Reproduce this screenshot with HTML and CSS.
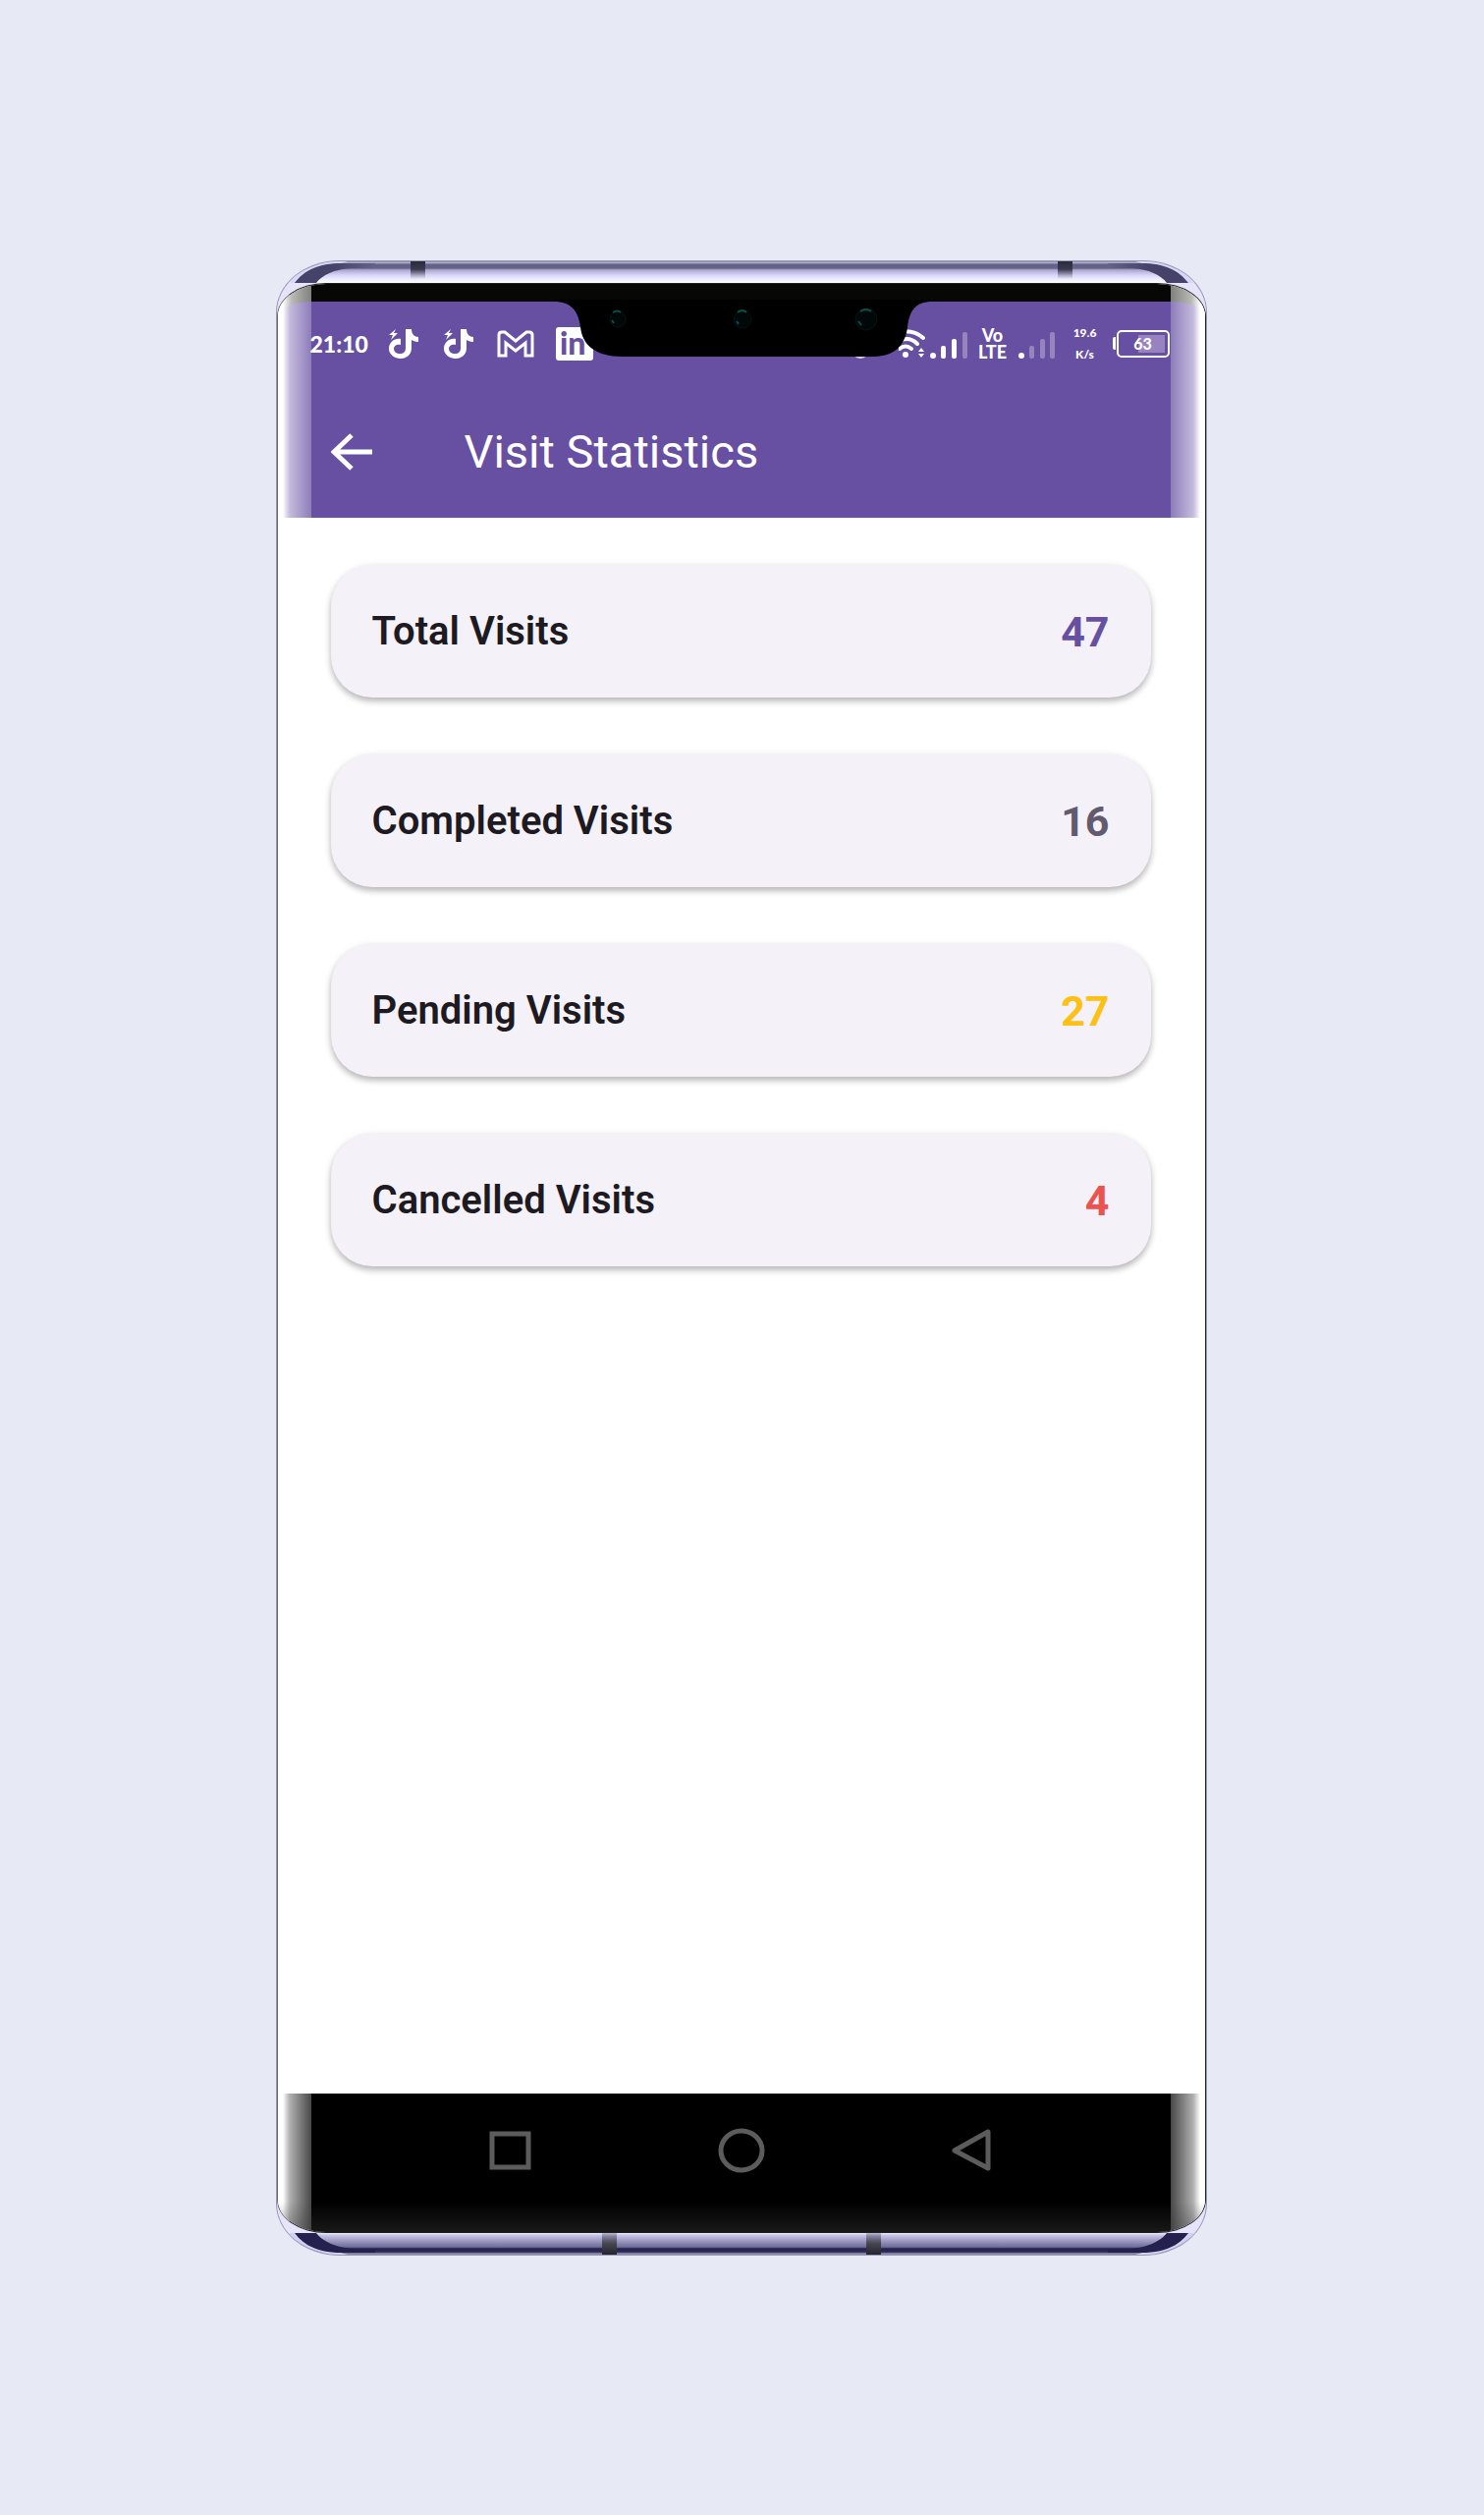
FILE: index.html
```html
<!DOCTYPE html>
<html lang="en">
<head>
<meta charset="utf-8">
<meta name="viewport" content="width=device-width, initial-scale=1">
<title>Visit Statistics</title>
<link rel="stylesheet" href="styles.css">
</head>
<body>
<div class="phone">
  <svg class="rail" viewBox="0 0 946 22" preserveAspectRatio="none" aria-hidden="true">
    <defs>
      <linearGradient id="metal-top" x1="0" y1="0" x2="0" y2="1"><stop offset="0" stop-color="#8987a8"/><stop offset=".08" stop-color="#b4b2d0"/><stop offset=".13" stop-color="#65628a"/><stop offset=".32" stop-color="#65628a"/><stop offset=".4" stop-color="#aaa8cc"/><stop offset=".65" stop-color="#d9d7fa"/><stop offset="1" stop-color="#fff"/></linearGradient>
      <linearGradient id="mark-top" x1="0" y1="0" x2="0" y2="1"><stop offset="0" stop-color="#2b2b40"/><stop offset=".45" stop-color="#3a3a4e"/><stop offset="1" stop-color="#77778c" stop-opacity="0"/></linearGradient>
      <linearGradient id="wedge-top" x1="0" y1="0" x2="1" y2="0"><stop offset="0" stop-color="#454369"/><stop offset=".5" stop-color="#454369"/><stop offset="1" stop-color="#65628a"/></linearGradient>
      <g id="corner-top"><path fill="#d9d6f8" d="M0 22V0h72C54 4 44 12 38 22z"/><path fill="url(#wedge-top)" d="M18 22C28 9 42 2 66 2h34v5H76C58 8 46 14 40 22z"/></g>
    </defs>
    <rect width="946" height="22" fill="url(#metal-top)"/>
    <use href="#corner-top"/><use href="#corner-top" transform="matrix(-1 0 0 1 946 0)"/>
    <path fill="url(#mark-top)" d="M136 0h15v18h-15zM795 0h15v18h-15z"/>
  </svg>
  <div class="screen">
    <div class="top">
      <header class="header">
        <div class="status">
          <div class="status-left">
            <span class="clock">21:10</span>
            <svg class="app-icon" viewBox="0 0 30 32" aria-hidden="true"><path d="M17 1h6c0 5 3 8 7 8v5c-3 0-5-1-7-2v8c0 7-5 11-11 11S0 27 0 21s5-11 12-10v6c-4-1-7 1-7 4s3 5 6 5c4 0 6-2 6-6z"/><path d="M7 1 0 7h4l-2 5 7-7H5z"/></svg>
            <svg class="app-icon" viewBox="0 0 30 32" aria-hidden="true"><path d="M17 1h6c0 5 3 8 7 8v5c-3 0-5-1-7-2v8c0 7-5 11-11 11S0 27 0 21s5-11 12-10v6c-4-1-7 1-7 4s3 5 6 5c4 0 6-2 6-6z"/><path d="M7 1 0 7h4l-2 5 7-7H5z"/></svg>
            <svg class="mail-icon" viewBox="0 0 38 28" aria-hidden="true"><path d="M2 5Q2 2 5 2h3l11 9 11-9h3q3 0 3 3v21h-7V13l-10 8-10-8v13H2z"/></svg>
            <svg class="in-icon" viewBox="0 0 38 34" aria-hidden="true"><rect width="38" height="34" rx="3"/><text x="4" y="28">in</text></svg>
          </div>
          <div class="status-right">
            <svg class="signals" viewBox="0 0 72 32" aria-hidden="true"><path class="waves" d="M0 4Q15 1 25 10M0 13q11-5 19 3M1 21q6-5 12 0"/><circle cx="7" cy="27" r="3"/><path d="m23 20 3 4h-6zm0 10 3-4h-6z"/><circle cx="35" cy="28" r="3"/><rect x="43" y="18" width="5" height="13" rx="2"/><rect x="54" y="11" width="5" height="20" rx="2"/><rect class="dim" x="65" y="4" width="5" height="27" rx="2"/></svg>
            <span class="lte"><span>Vo</span><span>LTE</span></span>
            <svg class="bars" viewBox="0 0 37 32" aria-hidden="true"><circle cx="3" cy="28" r="3"/><rect class="dim" x="11" y="18" width="5" height="13" rx="2"/><rect class="dim" x="22" y="11" width="5" height="20" rx="2"/><rect class="dim" x="32" y="4" width="5" height="27" rx="2"/></svg>
            <span class="speed">19.6<br>K/s</span>
            <span class="battery">63</span>
          </div>
        </div>
        <div class="appbar">
          <button class="back" aria-label="Back"><svg viewBox="0 0 42 38" aria-hidden="true"><path d="M42 19H4M21 2 3 19l18 17"/></svg></button>
          <h1>Visit Statistics</h1>
        </div>
      </header>
      <svg class="notch" viewBox="0 0 386 60" aria-hidden="true">
        <ellipse cx="312" cy="51" rx="9" ry="9" fill="#d8d2e6"/>
        <path d="M0 0V2C18 2 25 12 27 28C29 46 42 58 70 58H325C349 58 358 44 360 28C362 12 367 2 386 2V0z"/>
        <g class="lens"><circle cx="65" cy="20" r="8"/><circle cx="192" cy="20" r="9"/><circle cx="318" cy="20" r="11"/></g>
        <path class="glint" d="M60 13q5-3 8 0M59 21l2 3M187 13q5-4 9 0M186 22l2 3M312 12q6-4 11 0M310 22l3 4"/>
      </svg>
    </div>
    <main class="stats">
      <section class="card"><h2>Total Visits</h2><p class="count total">47</p></section>
      <section class="card"><h2>Completed Visits</h2><p class="count completed">16</p></section>
      <section class="card"><h2>Pending Visits</h2><p class="count pending">27</p></section>
      <section class="card"><h2>Cancelled Visits</h2><p class="count cancelled">4</p></section>
    </main>
    <nav class="keys">
      <button aria-label="Recent apps"><svg viewBox="0 0 48 48" aria-hidden="true"><path d="M5 7h37v34H5z"/></svg></button>
      <button aria-label="Home"><svg viewBox="0 0 48 48" aria-hidden="true"><ellipse cx="24" cy="24" rx="21" ry="20"/></svg></button>
      <button aria-label="Back"><svg viewBox="0 0 48 48" aria-hidden="true"><path d="M40 5v37L6 24z"/></svg></button>
    </nav>
  </div>
  <svg class="rail" viewBox="0 0 946 22" preserveAspectRatio="none" aria-hidden="true">
    <defs>
      <linearGradient id="metal-bottom" x1="0" y1="0" x2="0" y2="1"><stop offset="0" stop-color="#efedff"/><stop offset=".12" stop-color="#c4c2e4"/><stop offset=".65" stop-color="#6d6b98"/><stop offset=".72" stop-color="#25214f"/><stop offset=".88" stop-color="#302c58"/><stop offset=".94" stop-color="#8b88a8"/><stop offset="1" stop-color="#8b88a8"/></linearGradient>
      <linearGradient id="mark-bottom" x1="0" y1="0" x2="0" y2="1"><stop offset="0" stop-color="#55556a" stop-opacity=".3"/><stop offset=".5" stop-color="#45454f"/><stop offset="1" stop-color="#25252f"/></linearGradient>
      <g id="corner-bottom"><path fill="#d3d0f3" d="M0 0V22h72C54 18 44 10 38 0z"/><path fill="#25214f" d="M18 0C28 13 42 20 66 20h34v-4H76C58 14 46 8 40 0z"/></g>
    </defs>
    <rect width="946" height="22" fill="url(#metal-bottom)"/>
    <use href="#corner-bottom"/><use href="#corner-bottom" transform="matrix(-1 0 0 1 946 0)"/>
    <path fill="url(#mark-bottom)" d="M331 0h15v22h-15zM600 0h15v22h-15z"/>
  </svg>
</div>
</body>
</html>
```
FILE: styles.css
```css
*{box-sizing:border-box}
body{
  margin:0;
  min-height:100vh;
  padding:266px 26px 265px 24px;
  display:flex;
  justify-content:center;
  background:#e7e9f5;
  font-family:Roboto,sans-serif;
}
h1,h2,p{margin:0}
svg{display:block}
button{
  padding:0;
  border:0;
  background:none;
  cursor:pointer;
}

/* Device frame */
.phone{
  width:100%;
  max-width:946px;
  display:flex;
  flex-direction:column;
  overflow:hidden;
  border-radius:64px / 52px;
  background:#e6e4fb;
  box-shadow:0 0 0 1px #9a98b4;
}
.rail{
  width:100%;
  height:22px;
  flex:none;
}
.screen{
  flex:1;
  display:flex;
  flex-direction:column;
  overflow:hidden;
  border:1px solid #222;
  border-left-color:#666;
  border-radius:50px / 34px;
  background:#fff;
}

/* Header */
.top{
  position:relative;
  padding-top:18px;
  background:linear-gradient(90deg,#fff 5px,#b9bab6 14px,#80817d 34px,#070706 34px,#070706 calc(100% - 35px),#80817d calc(100% - 35px),#b9bab6 calc(100% - 14px),#fff calc(100% - 5px));
}
.header{
  border-radius:35px 35px 0 0 / 16px 16px 0 0;
  background:linear-gradient(90deg,#fff 5px,#c5bbdd 12px,#8d7cba 34px,#674fa2 34px,#674fa2 calc(100% - 35px),#8d7cba calc(100% - 35px),#c5bbdd calc(100% - 12px),#fff calc(100% - 5px));
  color:#fff;
}
.notch{
  position:absolute;
  top:16px;
  left:50%;
  width:386px;
  margin-left:-191px;
}
.lens{fill:#020808;stroke:#031514}
.glint{fill:none;stroke:#07504f;stroke-width:2}
.status{
  height:86px;
  padding:0 36px 0 33px;
  display:flex;
  align-items:center;
  justify-content:space-between;
}
.status svg{fill:#fff}
.status-left,.status-right{
  display:flex;
  align-items:center;
}
.status-left{gap:22px}
.clock{
  width:58px;
  margin-right:-2px;
  font:900 23px/32px Lato,sans-serif;
}
.app-icon{width:34px;height:32px}
.status .mail-icon{
  width:38px;
  height:28px;
  fill:none;
  stroke:#fff;
  stroke-width:3;
}
.in-icon{width:38px;height:34px}
.in-icon text{
  fill:#674fa2;
  font:900 32px Lato,sans-serif;
}
.signals{width:72px;height:32px}
.status .waves{
  fill:none;
  stroke:#fff;
  stroke-width:4;
  stroke-linecap:round;
}
.dim{opacity:.3}
.lte{
  width:36px;
  margin:0 8px 0 6px;
  display:flex;
  flex-direction:column;
  align-items:center;
  font:900 18px/17px Lato,sans-serif;
}
.bars{width:37px;height:32px}
.speed{
  width:28px;
  margin:0 14px 0 17px;
  font:900 12px/22px Lato,sans-serif;
  text-align:center;
}
.battery{
  position:relative;
  width:54px;
  height:28px;
  margin-left:4px;
  border:2px solid #fff;
  border-radius:5px;
  background:linear-gradient(#9683bf,#9683bf) 20px 3px / 27px 18px no-repeat;
  font:900 16px/24px Lato,sans-serif;
  text-align:center;
}
.battery::before{
  content:"";
  position:absolute;
  top:5px;
  left:-6px;
  width:3px;
  height:13px;
  border-radius:2px 0 0 2px;
  background:#fff;
}
.appbar{
  height:134px;
  padding-left:54px;
  display:flex;
  align-items:center;
  gap:94px;
}
.back svg{
  width:42px;
  height:38px;
  fill:none;
  stroke:#fff;
  stroke-width:5;
}
h1{
  font-size:47px;
  font-weight:400;
  line-height:52px;
}

/* Statistics */
.stats{
  flex:1;
  padding:48px 55px 48px 54px;
  display:flex;
  flex-direction:column;
  gap:58px;
}
.card{
  min-height:135px;
  padding:0 42px;
  display:flex;
  align-items:center;
  justify-content:space-between;
  border-radius:42px;
  background:#f5f1f9;
  box-shadow:0 4px 6px rgba(0,0,0,.24),0 1px 8px rgba(0,0,0,.08);
}
h2{
  color:#1d1a22;
  font-size:40px;
  font-weight:600;
  line-height:44px;
}
.count{
  font-size:43px;
  font-weight:700;
  line-height:48px;
}
.total{color:#674fa2}
.completed{color:#625b70}
.pending{color:#fdc015}
.cancelled{color:#ea5350}

/* System keys */
.keys{
  height:141px;
  padding-bottom:26px;
  display:flex;
  align-items:center;
  justify-content:center;
  gap:187px;
  background:
    linear-gradient(transparent 110px,rgba(60,60,60,.4)),
    linear-gradient(90deg,#fff 5px,#b0b0b0 12px,#484848 34px,#000 34px,#000 calc(100% - 35px),#484848 calc(100% - 35px),#b0b0b0 calc(100% - 12px),#fff calc(100% - 5px));
}
.keys svg{
  width:48px;
  height:48px;
  fill:none;
  stroke:#5c5c5c;
  stroke-width:5;
  stroke-linejoin:round;
}
.keys button:first-child svg{stroke-linejoin:miter}
```
